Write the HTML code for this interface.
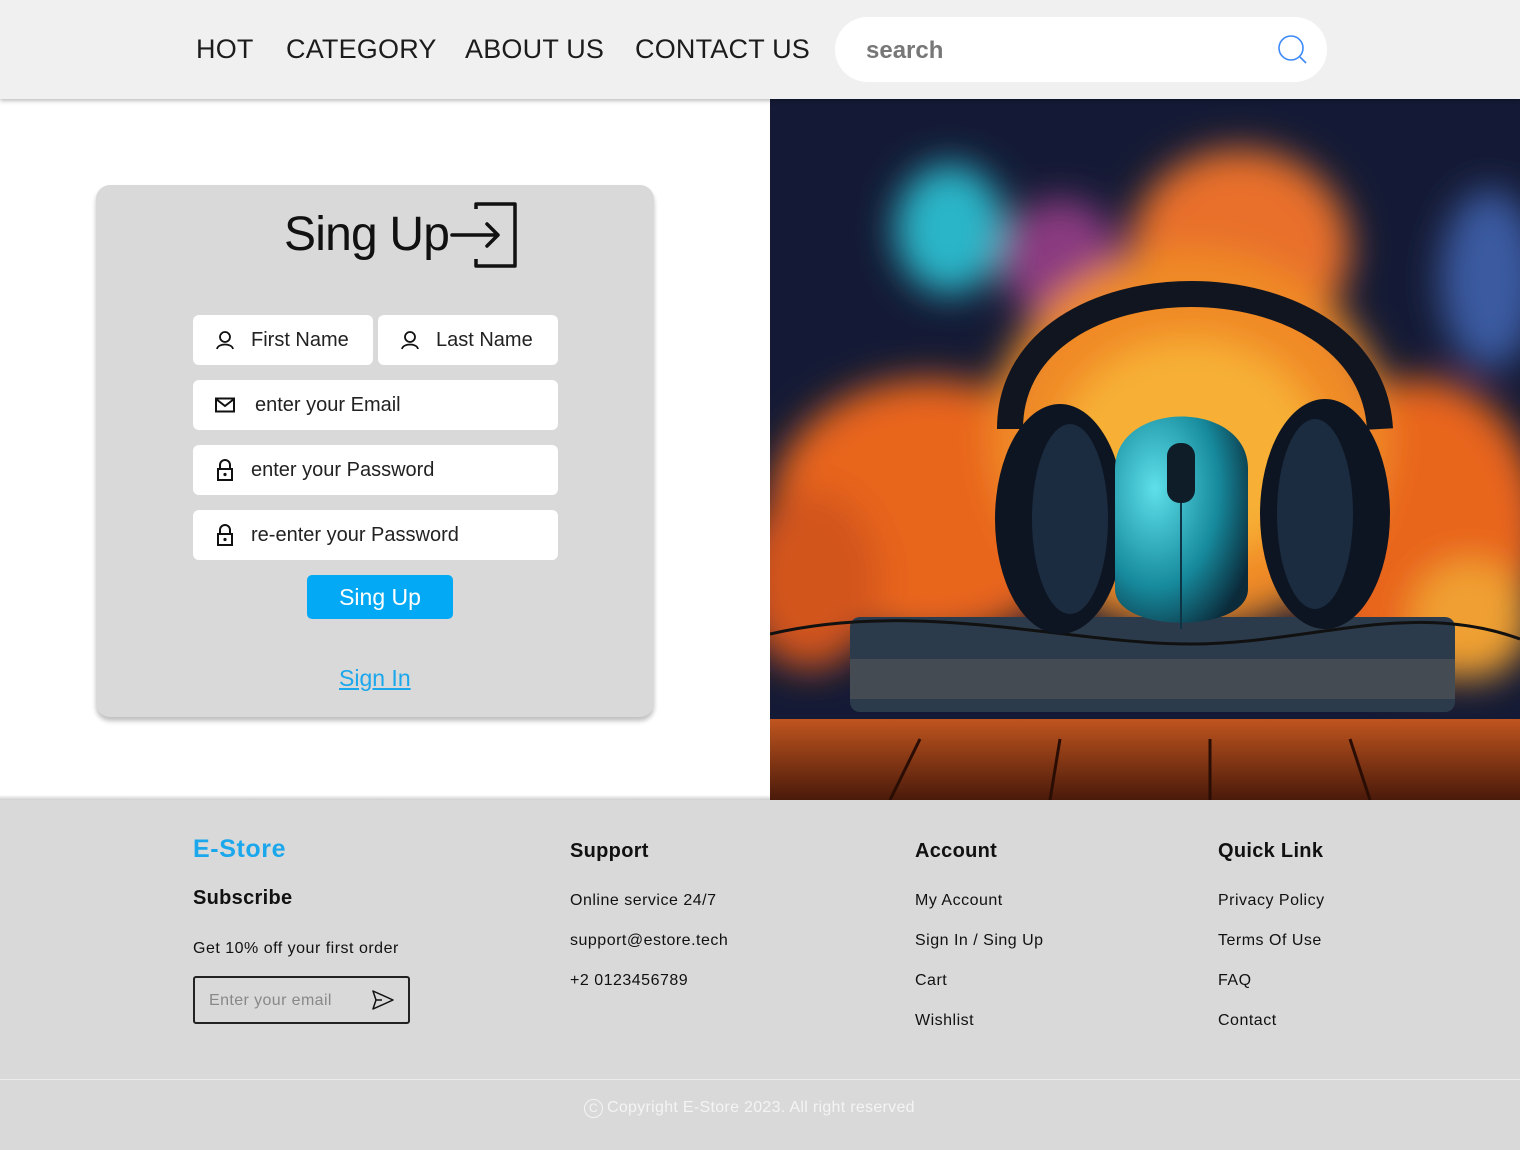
<!DOCTYPE html>
<html><head><meta charset="utf-8"><style>
*{margin:0;padding:0;box-sizing:border-box}
body{width:1520px;height:1150px;position:relative;background:#fff;font-family:"Liberation Sans",sans-serif;overflow:hidden;color:#111}
.abs{position:absolute;white-space:nowrap}
header{position:absolute;left:0;top:0;width:1520px;height:99px;background:#f0f0f0;box-shadow:0 2px 4px rgba(0,0,0,.25);z-index:2}
.nav{font-size:27px;color:#1c1c1c;top:34px;letter-spacing:.2px}
.search{left:835px;top:17px;width:492px;height:65px;background:#fff;border-radius:33px}
.card{left:96px;top:185px;width:558px;height:532px;background:#d9d9d9;border-radius:14px;box-shadow:0 4px 5px rgba(0,0,0,.25)}
.inp{position:absolute;background:#fff;border-radius:6px;height:50px;font-size:20px;color:#222;display:flex;align-items:center}
.inp svg{margin-left:22px;margin-right:16px}
footer{position:absolute;left:0;top:800px;width:1520px;height:350px;background:#d9d9d9}
.fh{font-size:20px;font-weight:bold;color:#111;letter-spacing:.3px}
.fi{font-size:16px;color:#111;letter-spacing:.5px}
</style></head><body>
<header>
<div class="abs nav" style="left:196px">HOT</div>
<div class="abs nav" style="left:286px">CATEGORY</div>
<div class="abs nav" style="left:465px">ABOUT US</div>
<div class="abs nav" style="left:635px">CONTACT US</div>
<div class="abs search">
<div class="abs" style="left:31px;top:20px;font-size:24px;font-weight:bold;color:#777">search</div>
<svg class="abs" style="left:440px;top:16px" width="36" height="36" viewBox="0 0 36 36"><circle cx="16" cy="15" r="12" fill="none" stroke="#3d8af7" stroke-width="1.6"/><line x1="25" y1="24" x2="31" y2="30" stroke="#3d8af7" stroke-width="1.6"/></svg>
</div>
</header>

<div class="abs card">
<div class="abs" style="left:188px;top:22px;font-size:48px;color:#111;letter-spacing:-.8px">Sing Up</div>
<svg class="abs" style="left:354px;top:16px" width="70" height="68" viewBox="0 0 70 68"><path d="M26 8 V3 H65 V65 H26 V58" fill="none" stroke="#111" stroke-width="3.5" stroke-linejoin="round"/><path d="M2 34 H47 M37 23 L48 34 L37 45" fill="none" stroke="#111" stroke-width="3.5" stroke-linecap="round" stroke-linejoin="round"/></svg>
<div class="inp" style="left:97px;top:130px;width:180px"><svg width="20" height="20" viewBox="0 0 20 20"><circle cx="10" cy="7" r="5" fill="none" stroke="#111" stroke-width="1.8"/><path d="M2 19 C3 13 17 13 18 19" fill="none" stroke="#111" stroke-width="1.8"/></svg>First Name</div>
<div class="inp" style="left:282px;top:130px;width:180px"><svg width="20" height="20" viewBox="0 0 20 20"><circle cx="10" cy="7" r="5" fill="none" stroke="#111" stroke-width="1.8"/><path d="M2 19 C3 13 17 13 18 19" fill="none" stroke="#111" stroke-width="1.8"/></svg>Last Name</div>
<div class="inp" style="left:97px;top:195px;width:365px"><svg width="20" height="16" viewBox="0 0 20 16" style="margin-right:20px"><rect x="1" y="1.5" width="18" height="13" fill="none" stroke="#111" stroke-width="2"/><path d="M1 2 L10 9 L19 2" fill="none" stroke="#111" stroke-width="2"/></svg>enter your Email</div>
<div class="inp" style="left:97px;top:260px;width:365px"><svg width="20" height="22" viewBox="0 0 20 22"><path d="M5 10 V6 a5 5 0 0 1 10 0 V10" fill="none" stroke="#111" stroke-width="2"/><rect x="3" y="10" width="14" height="11" fill="none" stroke="#111" stroke-width="2"/><circle cx="10" cy="15.5" r="1.6" fill="#111"/></svg>enter your Password</div>
<div class="inp" style="left:97px;top:325px;width:365px"><svg width="20" height="22" viewBox="0 0 20 22"><path d="M5 10 V6 a5 5 0 0 1 10 0 V10" fill="none" stroke="#111" stroke-width="2"/><rect x="3" y="10" width="14" height="11" fill="none" stroke="#111" stroke-width="2"/><circle cx="10" cy="15.5" r="1.6" fill="#111"/></svg>re-enter your Password</div>
<div class="abs" style="left:211px;top:390px;width:146px;height:44px;background:#03a9f4;border-radius:5px;color:#fff;font-size:23px;text-align:center;line-height:44px">Sing Up</div>
<div class="abs" style="left:243px;top:480px;font-size:23px;color:#1aa7ec;text-decoration:underline">Sign In</div>
</div>

<svg class="abs" style="left:770px;top:99px" width="750" height="701" viewBox="0 0 750 701">
<defs>
<filter id="b"><feGaussianBlur stdDeviation="18"/></filter>
<radialGradient id="m" cx=".3" cy=".35" r=".8"><stop offset="0" stop-color="#5ee0ea"/><stop offset=".6" stop-color="#168a9c"/><stop offset="1" stop-color="#0b2a3a"/></radialGradient>
<linearGradient id="w" x1="0" y1="0" x2="0" y2="1"><stop offset="0" stop-color="#c0551f"/><stop offset="1" stop-color="#4a1a0a"/></linearGradient>
</defs>
<rect width="750" height="701" fill="#141a35"/>
<g filter="url(#b)">
<ellipse cx="180" cy="130" rx="55" ry="65" fill="#2bb5c8"/>
<ellipse cx="720" cy="180" rx="50" ry="90" fill="#3a5aa0"/>
<ellipse cx="290" cy="160" rx="60" ry="60" fill="#8a3a80"/>
<ellipse cx="470" cy="150" rx="110" ry="100" fill="#e8702a"/>
<ellipse cx="160" cy="410" rx="160" ry="130" fill="#e8651c"/>
<ellipse cx="650" cy="430" rx="120" ry="150" fill="#e8651c"/>
<ellipse cx="420" cy="340" rx="200" ry="190" fill="#f08a25"/>
<ellipse cx="420" cy="350" rx="130" ry="110" fill="#f7b035"/>
<ellipse cx="40" cy="480" rx="70" ry="90" fill="#d2541a"/>
<ellipse cx="700" cy="520" rx="60" ry="60" fill="#f0a030"/>
</g>
<rect x="0" y="620" width="750" height="81" fill="url(#w)"/>
<g stroke="#2a0d05" stroke-width="3"><line x1="150" y1="640" x2="120" y2="701"/><line x1="290" y1="640" x2="280" y2="701"/><line x1="440" y1="640" x2="440" y2="701"/><line x1="580" y1="640" x2="600" y2="701"/></g>
<rect x="80" y="518" width="605" height="95" rx="10" fill="#2c3b4c"/>
<rect x="80" y="560" width="605" height="40" fill="#454b52"/>
<path d="M0 535 C150 500 300 545 420 545 C540 545 640 500 750 540" fill="none" stroke="#111" stroke-width="3"/>
<path d="M240 330 C240 150 600 150 610 330" fill="none" stroke="#11151f" stroke-width="26"/>
<ellipse cx="290" cy="420" rx="65" ry="115" fill="#0e1522"/>
<ellipse cx="555" cy="415" rx="65" ry="115" fill="#0e1522"/>
<ellipse cx="300" cy="420" rx="38" ry="95" fill="#1b2c40"/>
<ellipse cx="545" cy="415" rx="38" ry="95" fill="#1b2c40"/>
<path d="M345 370 C345 300 478 300 478 370 L478 490 C478 535 345 535 345 490 Z" fill="url(#m)"/>
<rect x="397" y="344" width="28" height="60" rx="13" fill="#0f1d28"/>
<line x1="411" y1="404" x2="411" y2="530" stroke="#0d3444" stroke-width="2"/>
</svg>

<div class="abs" style="left:0;top:795px;width:770px;height:6px;background:linear-gradient(#fff,#c4c4c4)"></div>
<footer>
<div class="abs" style="left:193px;top:35px;font-size:25px;font-weight:bold;color:#1aa7ec;letter-spacing:.6px">E-Store</div>
<div class="abs fh" style="left:193px;top:87px">Subscribe</div>
<div class="abs fi" style="left:193px;top:140px">Get 10% off your first order</div>
<div class="abs" style="left:193px;top:176px;width:217px;height:48px;border:2px solid #222;border-radius:3px">
<div class="abs" style="left:14px;top:14px;font-size:16px;color:#888;letter-spacing:.4px">Enter your email</div>
<svg class="abs" style="left:177px;top:12px" width="22" height="20" viewBox="0 0 22 20"><path d="M1 1 L21 10 L1 19 L4 10 Z M4 10 H10" fill="none" stroke="#111" stroke-width="1.5" stroke-linejoin="round"/></svg>
</div>
<div class="abs fh" style="left:570px;top:40px">Support</div>
<div class="abs fi" style="left:570px;top:92px">Online service 24/7</div>
<div class="abs fi" style="left:570px;top:132px">support@estore.tech</div>
<div class="abs fi" style="left:570px;top:172px">+2 0123456789</div>
<div class="abs fh" style="left:915px;top:40px">Account</div>
<div class="abs fi" style="left:915px;top:92px">My Account</div>
<div class="abs fi" style="left:915px;top:132px">Sign In / Sing Up</div>
<div class="abs fi" style="left:915px;top:172px">Cart</div>
<div class="abs fi" style="left:915px;top:212px">Wishlist</div>
<div class="abs fh" style="left:1218px;top:40px">Quick Link</div>
<div class="abs fi" style="left:1218px;top:92px">Privacy Policy</div>
<div class="abs fi" style="left:1218px;top:132px">Terms Of Use</div>
<div class="abs fi" style="left:1218px;top:172px">FAQ</div>
<div class="abs fi" style="left:1218px;top:212px">Contact</div>
<div class="abs" style="left:0;top:279px;width:1520px;height:1px;background:#ececec"></div>
<div class="abs" style="left:584px;top:298px;height:20px;font-size:16px;color:#f4f4f4;letter-spacing:.3px;display:flex;align-items:center;gap:4px"><span style="display:inline-block;width:19px;height:19px;border:1.5px solid #f4f4f4;border-radius:50%;font-size:12px;text-align:center;line-height:16px">C</span>Copyright E-Store 2023. All right reserved</div>
</footer>
</body></html>
